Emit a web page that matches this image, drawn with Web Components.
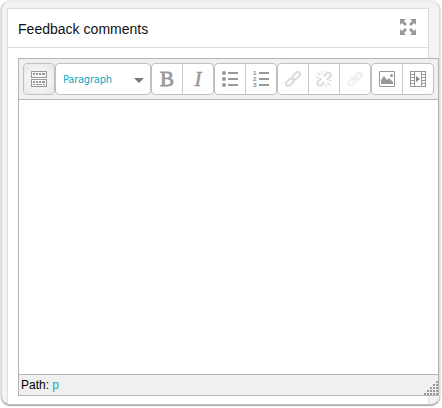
<!DOCTYPE html>
<html lang="en">
<head>
<meta charset="utf-8">
<title>Feedback comments</title>
<style>
html,body{margin:0;width:442px;height:408px;overflow:hidden;background:#fff}
body{font-family:"Liberation Sans",Arial,sans-serif;color:#111}
</style>
</head>
<body>
<window-frame>
  <feedback-panel>
    <span slot="title">Feedback comments</span>
    <tool-icon slot="action" name="expand"></tool-icon>
    <rich-editor></rich-editor>
  </feedback-panel>
</window-frame>
<script>
const define = (name, html, setup) => {
  const template = document.createElement('template');
  template.innerHTML = html;
  customElements.define(name, class extends HTMLElement {
    constructor() {
      super();
      this.attachShadow({mode: 'open'}).append(template.content.cloneNode(true));
    }
    connectedCallback() { if (setup) setup(this); }
  });
};

const rects = (list) => list.map(([x, y, w, h]) => `<rect x="${x}" y="${y}" width="${w}" height="${h}"/>`).join('');
const loops = '<rect x="7" y="2.4" width="8.6" height="4.6" rx="2.3" transform="rotate(-45 11.3 4.7)"/><rect x=".4" y="9" width="8.6" height="4.6" rx="2.3" transform="rotate(-45 4.7 11.3)"/>';
const halves = '<path d="M7.6 5.4L10.4 2.4a2.5 2.5 0 0 1 3.6 3.5L10.6 9M5.4 7.4L2 10.5a2.5 2.5 0 0 0 3.6 3.5L8.4 11.4"/>';
const icons = {
  expand: `<g fill="#999"><path d="M0 0h6L4 2l3 3-2 2-3-3-2 2zM16 0v6l-2-2-3 3-2-2 3-3-2-2zM0 16v-6l2 2 3-3 2 2-3 3 2 2zM16 16h-6l2-2-3-3 2-2 3 3 2-2z"/></g>`,
  keyboard: `<g fill="#999" shape-rendering="crispEdges">${rects([[0,0,16,1],[0,6,16,1],[0,1,1,5],[15,1,1,5],[0,8,16,1],[0,15,16,1],[0,9,1,6],[15,9,1,6],[2,2,2,2],[5,2,2,2],[8,2,2,2],[11,2,3,2],[2,10,2,2],[5,10,2,2],[8,10,2,2],[11,10,3,2],[2,13,2,1],[5,13,6,1],[12,13,2,1]])}</g>`,
  bold: '<text x="8" y="15" text-anchor="middle" font-family="Liberation Serif" font-size="21" fill="#999" stroke="#999" stroke-width=".8">B</text>',
  italic: '<text x="8" y="15" text-anchor="middle" font-family="Liberation Serif" font-size="21" font-style="italic" fill="#999" stroke="#999" stroke-width=".5">I</text>',
  bullets: `<g fill="#999"><circle cx="2" cy="2" r="2"/><circle cx="2" cy="8" r="2"/><circle cx="2" cy="14" r="2"/>${rects([[6,1,10,2],[6,7,10,2],[6,13,10,2]])}</g>`,
  numbers: `<g fill="#999" shape-rendering="crispEdges">${rects([[6,1,10,2],[6,7,10,2],[6,13,10,2]])}</g><g font-family="Liberation Sans" font-size="6.2" fill="#888" stroke="#888" stroke-width=".2"><text x="0" y="4">1</text><text x="0" y="10">2</text><text x="0" y="16">3</text></g>`,
  link: `<g fill="none" stroke="#ddd" stroke-width="2.1">${loops}</g>`,
  unlink: `<g fill="none" stroke="#ddd"><g stroke-width="2.2">${halves}</g><path d="M1.5 1.5l3 3M5.5 0l.8 3M0 6l3 .6M9.8 13l.8 3M11.5 11.5l3 3M13 9.4l3 .6" stroke-width="1.1"/></g>`,
  nolink: `<g fill="none" stroke="#f0f0f0" stroke-width="2.2">${halves}<path d="M4.5 4.5l7 7M8 4v8M4.5 8h7M5.5 10.5l5-5" stroke-width="1.3"/></g>`,
  image: `<path d="M.5.5h15v15H.5z" fill="none" stroke="#999"/><path d="M2 13V9l3-4 3 4 2-2 4 4v2z" fill="#999"/><circle cx="12.5" cy="4.5" r="1.5" fill="#999"/>`,
  media: `<g fill="#999" shape-rendering="crispEdges">${rects([[0,0,5,1],[11,0,5,1],[4,0,8,1],[0,15,16,1],[0,0,1,16],[4,0,1,16],[11,0,1,16],[15,0,1,16],[0,3,5,1],[0,6,5,1],[0,9,5,1],[0,12,5,1],[11,3,5,1],[11,6,5,1],[11,9,5,1],[11,12,5,1]])}</g><path d="M6 5l4 3-4 3z" fill="#888"/>`
};

define('tool-icon', `<style>:host{display:block;width:16px;height:16px}svg{display:block;overflow:visible}</style><svg width="16" height="16" viewBox="0 0 16 16"></svg>`, el => {
  el.shadowRoot.querySelector('svg').innerHTML = icons[el.getAttribute('name')] || '';
});

define('window-frame', `<style>
:host{display:block;box-sizing:border-box;width:439px;height:404px;margin:1px 0 0 1px;padding:6px 0 0 5px;border:1px solid #ececec;border-left-color:#d0d0d0;border-bottom-color:#bbb;border-right-color:#ddd;border-radius:9px;background:#f3f3f3;overflow:hidden;box-shadow:0 1px 1px #aaa,0 0 2px #bbb}
</style><slot></slot>`);

define('feedback-panel', `<style>
:host{display:block;box-sizing:border-box;width:422px;height:410px;border:1px solid #ddd;background:#fff}
header{display:flex;box-sizing:border-box;height:39px;padding:0 12px 0 10px;align-items:center;justify-content:space-between;border-bottom:1px solid #ddd;font-size:14px;line-height:20px}
header ::slotted(span){padding-top:2px;white-space:nowrap;letter-spacing:.02px}
header ::slotted(tool-icon){margin-bottom:2px}
main{padding:10px 0 0 10px}
</style><header><slot name="title"></slot><slot name="action"></slot></header><main><slot></slot></main>`);

define('button-group', `<style>
:host{display:flex;box-sizing:border-box;height:32px;border:1px solid #c0c0c0;border-radius:4px;background:#fff;flex:none;overflow:hidden}
</style><slot></slot>`);

define('tool-button', `<style>
:host{display:flex;width:30px;height:30px;align-items:center;justify-content:center}
:host(:not(:last-child)){border-right:1px solid #c8c8c8}
:host([active]){background:radial-gradient(#fff,#e6e6e6)}
</style><tool-icon></tool-icon>`, el => {
  const icon = el.shadowRoot.querySelector('tool-icon');
  icon.shadowRoot.querySelector('svg').innerHTML = icons[el.getAttribute('name')];
});

define('format-select', `<style>
:host{display:flex;box-sizing:border-box;width:94px;height:30px;padding:0 6px 0 7px;align-items:center;justify-content:space-between;color:#0eaac2;font:11px "DejaVu Sans Condensed","DejaVu Sans",sans-serif;letter-spacing:-.2px}
span{padding-top:1px}
i{margin-top:2px;border:5px solid transparent;border-top-color:#777;border-bottom:0}
</style><span><slot></slot></span><i></i>`);

define('rich-editor', `<style>
:host{display:flex;flex-direction:column;box-sizing:border-box;width:421px;height:338px;border:1px solid #b5b5b5;background:#fff}
nav{display:flex;box-sizing:border-box;height:41px;padding:4px 0 0 4px;background:#f0f0f0;border-bottom:1px solid #b5b5b5}
section{flex:1}
footer{display:flex;box-sizing:border-box;height:21px;padding-left:2px;align-items:center;justify-content:space-between;background:#f0f0f0;border-top:1px solid #b5b5b5;color:#000;font-size:12px}
footer b{font-weight:normal;color:#0eaac2}
svg{display:block;align-self:end}
</style>
<nav>
<button-group><tool-button active name="keyboard"></tool-button></button-group>
<button-group><format-select>Paragraph</format-select></button-group>
<button-group><tool-button name="bold"></tool-button><tool-button name="italic"></tool-button></button-group>
<button-group><tool-button name="bullets"></tool-button><tool-button name="numbers"></tool-button></button-group>
<button-group><tool-button name="link"></tool-button><tool-button name="unlink"></tool-button><tool-button name="nolink"></tool-button></button-group>
<button-group><tool-button name="image"></tool-button><tool-button name="media"></tool-button></button-group>
</nav>
<section></section>
<footer><span>Path: <b>p</b></span><svg width="14" height="15" shape-rendering="crispEdges" fill="#999"></svg></footer>`, el => {
  const dots = [];
  for (let r = 0; r < 5; r++) for (let c = 4 - r; c < 5; c++) dots.push([c * 3, r * 3 + 1, 2, 2]);
  el.shadowRoot.querySelector('footer svg').innerHTML = rects(dots);
});
</script>
</body>
</html>
